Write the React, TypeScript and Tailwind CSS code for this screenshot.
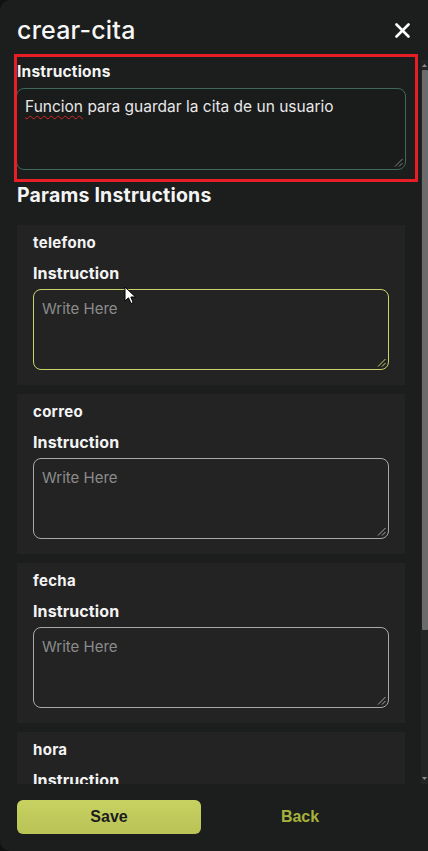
import React from "react";

const Grip = ({ color }: { color: string }) => (
  <svg className="absolute right-[2px] bottom-[2px]" width="9" height="9" viewBox="0 0 9 9">
    <line x1="8.5" y1="1" x2="1" y2="8.5" stroke={color} strokeWidth="1" />
    <line x1="8.5" y1="5" x2="5" y2="8.5" stroke={color} strokeWidth="1" />
  </svg>
);

const ParamCard = ({ name, focused, clipped }: { name: string; focused?: boolean; clipped?: boolean }) => (
  <div className="bg-[#232323] px-4 pt-[8px] pb-[15px] shrink-0">
    <div className="text-[15px] leading-[20px] font-bold tracking-[0.3px] text-[#f4f4f4]">{name}</div>
    <div className="mt-[9px] text-[16px] leading-[22px] font-bold tracking-[0.1px] text-[#f4f4f4]">Instruction</div>
    {!clipped && (
      <div
        className={
          "relative mt-[5px] h-[81px] rounded-[8px] border px-[8px] pt-[8px] text-[15px] leading-[22px] text-[#8c8c8c] " +
          (focused ? "border-[#c9d26b]" : "border-[#a8a8a8]")
        }
      >
        Write Here
        <Grip color={focused ? "#c9d26b" : "#a8a8a8"} />
      </div>
    )}
  </div>
);

export default function App() {
  return (
    <div className="w-[428px] h-[851px] bg-[#111111] overflow-hidden" style={{ fontFamily: "Inter, 'Noto Sans', sans-serif" }}>
      <div className="relative w-full h-full bg-[#1c1d1d] rounded-l-[10px] flex flex-col">
        {/* header */}
        <div className="h-[60px] shrink-0 flex items-center justify-between pl-[17px] pr-[17px]">
          <div className="text-[25px] font-medium text-[#f6f6f6] tracking-[0.2px] leading-none">crear-cita</div>
          <svg width="15" height="15" viewBox="0 0 15 15" className="mr-[1px]">
            <line x1="1.5" y1="1.5" x2="13.5" y2="13.5" stroke="#ffffff" strokeWidth="2.6" strokeLinecap="round" />
            <line x1="13.5" y1="1.5" x2="1.5" y2="13.5" stroke="#ffffff" strokeWidth="2.6" strokeLinecap="round" />
          </svg>
        </div>

        {/* scroll area */}
        <div className="flex-1 min-h-0 flex">
          <div className="flex-1 min-w-0 overflow-hidden pl-[17px] pr-[16px] pt-[2px]">
            <div className="text-[15.5px] leading-[20px] font-bold tracking-[0.2px] text-[#f4f4f4]">Instructions</div>
            <div className="relative mt-[6px] -mx-[1px] h-[82px] rounded-[8px] border border-[#3e6958] bg-[#1a1b1b] px-[8px] pt-[7px] text-[15.5px] leading-[22px] text-[#e8e8e8]">
              <span className="underline decoration-wavy decoration-[#d02828] decoration-[1px] underline-offset-[3px]">Funcion</span> para guardar la cita de un usuario
              <Grip color="#7a8a84" />
            </div>
            <div className="mt-[12px] text-[19.5px] leading-[26px] font-bold tracking-[0.2px] text-[#f4f4f4]">Params Instructions</div>
            <div className="mt-[17px] flex flex-col gap-[9px]">
              <ParamCard name="telefono" focused />
              <ParamCard name="correo" />
              <ParamCard name="fecha" />
              <ParamCard name="hora" clipped />
            </div>
          </div>
          {/* scrollbar */}
          <div className="w-[7px] shrink-0 bg-[#232424] flex flex-col items-center">
            <svg width="7" height="10" viewBox="0 0 7 10" className="shrink-0">
              <polygon points="1,7 6,7 3.5,4" fill="#8a8a8a" />
            </svg>
            <div className="w-[6px] h-[560px] bg-[#6b6b6b] rounded-[1px]" />
            <div className="flex-1" />
            <svg width="7" height="10" viewBox="0 0 7 10" className="shrink-0">
              <polygon points="1,3 6,3 3.5,6" fill="#8a8a8a" />
            </svg>
          </div>
        </div>

        {/* footer */}
        <div className="h-[67px] shrink-0 flex items-start pt-[16px] pl-[17px]" style={{ fontFamily: "'Liberation Sans', Arial, sans-serif" }}>
          <button className="w-[184px] h-[34px] rounded-[6px] bg-gradient-to-b from-[#c8d262] to-[#b9c356] text-[#1c1c1c] text-[16px] font-bold">
            Save
          </button>
          <div className="w-[198px] h-[34px] flex items-center justify-center text-[16px] font-bold text-[#a6b23c]">Back</div>
        </div>

        {/* red annotation box */}
        <div className="absolute left-[14px] top-[54px] w-[404px] h-[128px] border-[3px] border-[#e81e27] pointer-events-none" />

        {/* mouse cursor */}
        <svg className="absolute left-[124px] top-[286px]" width="13" height="19" viewBox="0 0 13 19">
          <path d="M1 1 L1 15 L4.5 11.8 L7 17.5 L9.2 16.5 L6.8 11 L11.5 11 Z" fill="#ffffff" stroke="#000000" strokeWidth="1" strokeLinejoin="round" />
        </svg>
      </div>
    </div>
  );
}
